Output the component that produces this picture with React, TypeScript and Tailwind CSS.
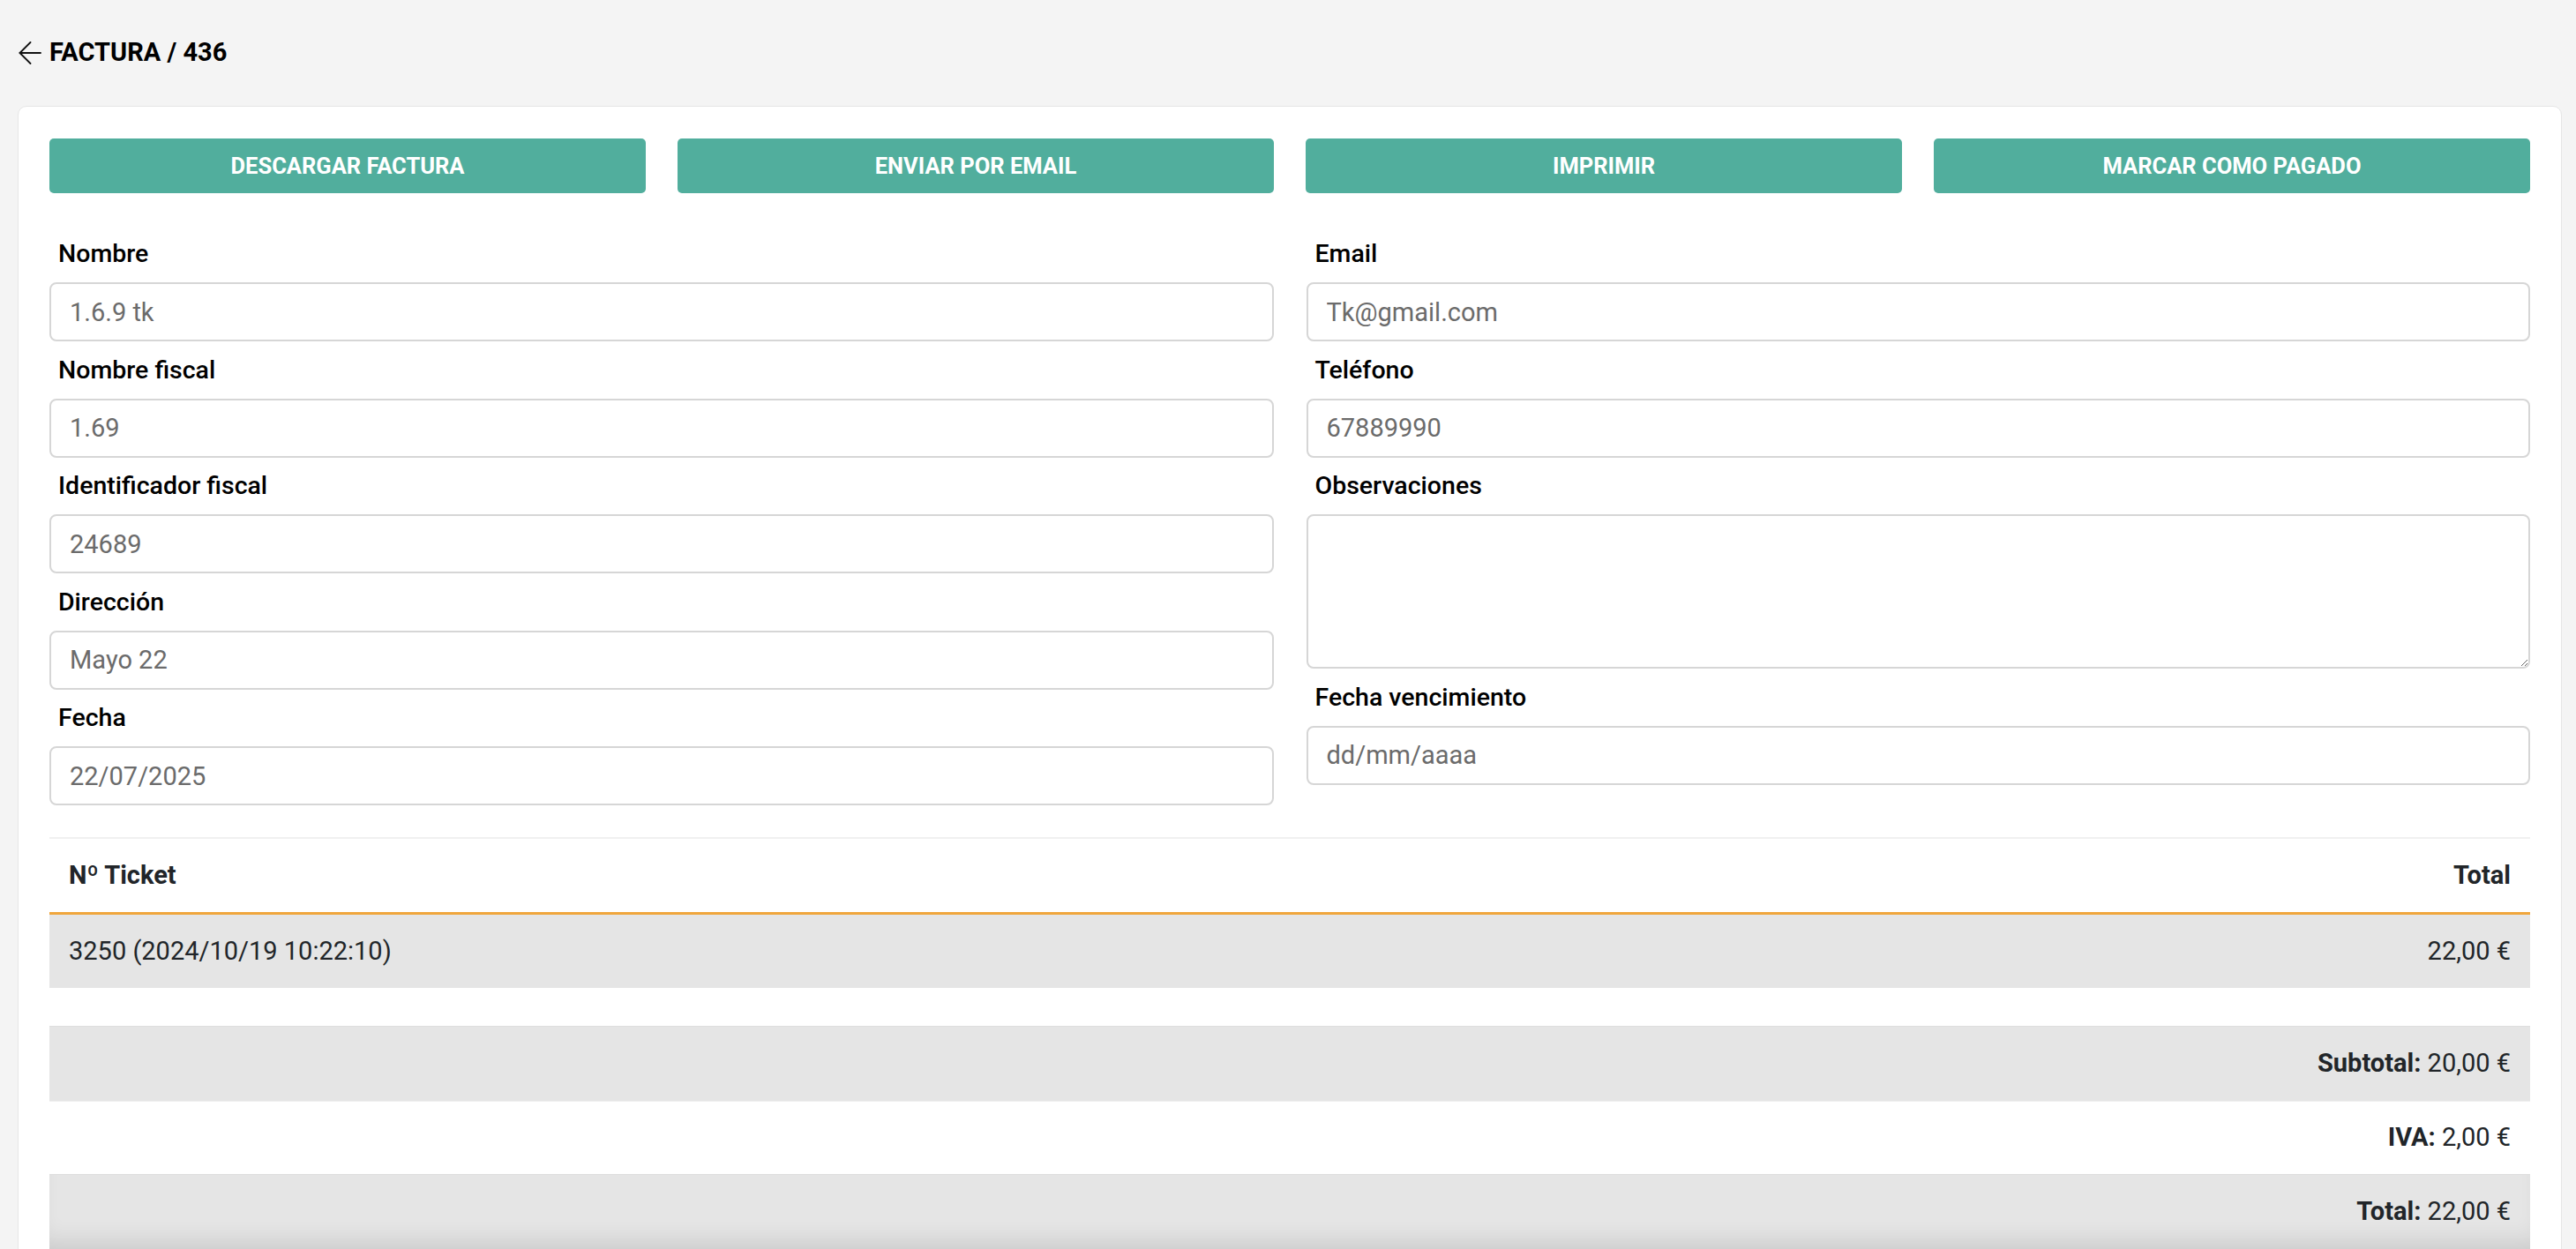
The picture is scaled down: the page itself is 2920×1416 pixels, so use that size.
import React from 'react';

const BUTTONS = ['DESCARGAR FACTURA', 'ENVIAR POR EMAIL', 'IMPRIMIR', 'MARCAR COMO PAGADO'];

const LEFT = [
  { label: 'Nombre', value: '1.6.9 tk' },
  { label: 'Nombre fiscal', value: '1.69' },
  { label: 'Identificador fiscal', value: '24689' },
  { label: 'Dirección', value: 'Mayo 22' },
  { label: 'Fecha', value: '22/07/2025' },
];

const Label = ({ children }: { children: React.ReactNode }) => (
  <label className="block h-[42px] px-[10px] text-[28.5px] font-medium leading-[42px] text-black">{children}</label>
);

const Field = ({ label, value, placeholder }: { label: string; value?: string; placeholder?: string }) => (
  <div className="flex flex-col">
    <Label>{label}</Label>
    <input
      readOnly
      value={value ?? ''}
      placeholder={placeholder}
      className="mt-[11px] h-[67px] w-full rounded-[8px] border-2 border-[#d6d6d6] bg-white px-[21px] text-[29px] text-[#6b6b6b] outline-none placeholder:text-[#6b6b6b]"
    />
  </div>
);

const ArrowBack = () => (
  <svg width="26" height="26" viewBox="0 0 26 26" fill="none" stroke="#111" strokeWidth="1.8" strokeLinecap="round" strokeLinejoin="round">
    <path d="M25 13H1.5" />
    <path d="M13.5 1 L1.5 13 L13.5 25" />
  </svg>
);

export default function App() {
  return (
    <div className="min-h-screen bg-[#f4f4f4] font-['Roboto','Liberation_Sans',sans-serif] text-[#212529]">
      <div className="flex h-[120px] items-center gap-[9px] pl-[21px]">
        <ArrowBack />
        <h1 className="text-[29px] font-bold text-black">FACTURA / 436</h1>
      </div>

      <div className="ml-[20px] mr-[16px] rounded-[10px] border border-[#e6e6e6] bg-white px-[35px] pt-[36px] pb-[40px]">
        <div className="grid grid-cols-4 gap-[36px]">
          {BUTTONS.map((b) => (
            <button
              key={b}
              className="h-[62px] rounded-[5px] bg-[#51ae9d] text-[25.5px] font-bold text-white"
            >
              {b}
            </button>
          ))}
        </div>

        <div className="mt-[48px] grid grid-cols-2 gap-x-[37px]">
          <div className="flex flex-col gap-[11.5px]">
            {LEFT.map((f) => (
              <Field key={f.label} label={f.label} value={f.value} />
            ))}
          </div>
          <div className="flex flex-col gap-[11.5px]">
            <Field label="Email" value="Tk@gmail.com" />
            <Field label="Teléfono" value="67889990" />
            <div className="flex flex-col">
              <Label>Observaciones</Label>
              <textarea
                readOnly
                className="mt-[11px] h-[175px] w-full rounded-[8px] border-2 border-[#d6d6d6] bg-white px-[21px] py-[14px] text-[29px] text-[#6b6b6b] outline-none"
              />
            </div>
            <Field label="Fecha vencimiento" placeholder="dd/mm/aaaa" />
          </div>
        </div>

        <div className="mt-[36px] border-t-2 border-[#f0f0f0]">
          <div className="flex h-[83px] items-center justify-between px-[22px] text-[29px] font-bold">
            <span>Nº Ticket</span>
            <span>Total</span>
          </div>
          <div className="h-[3px] bg-[#f0a63c]" />
          <div className="flex h-[83px] items-center justify-between bg-[#e5e5e5] px-[22px] text-[29px]">
            <span>3250 (2024/10/19 10:22:10)</span>
            <span>22,00 €</span>
          </div>
        </div>

        <div className="mt-[43px] text-[29px]">
          <div className="flex h-[85px] items-center justify-end border-t border-[#dedede] bg-[#e5e5e5] px-[22px]">
            <span><b>Subtotal:</b> 20,00 €</span>
          </div>
          <div className="flex h-[83px] items-center justify-end border-t border-[#eeeeee] bg-white px-[22px]">
            <span><b>IVA:</b> 2,00 €</span>
          </div>
          <div className="flex h-[85px] items-center justify-end border-t border-[#dedede] bg-[#e5e5e5] px-[22px] shadow-[inset_0_-22px_26px_-14px_rgba(0,0,0,0.12)]">
            <span><b>Total:</b> 22,00 €</span>
          </div>
        </div>
      </div>
    </div>
  );
}
